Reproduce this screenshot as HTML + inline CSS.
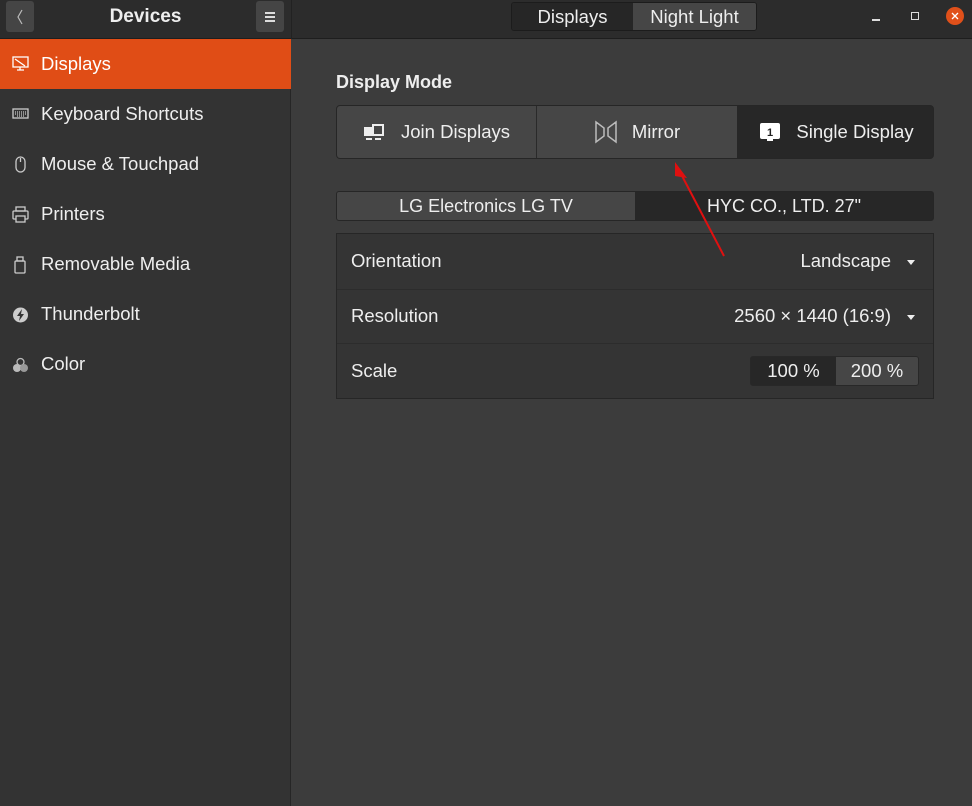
<!DOCTYPE html>
<html><head><style>
*{margin:0;padding:0;box-sizing:border-box}
body{width:972px;height:806px;background:#3c3c3c;font-family:"Liberation Sans",sans-serif;color:#eee;position:relative;overflow:hidden;font-size:18.5px}
.abs{position:absolute}
#hdr{left:0;top:0;width:972px;height:39px;background:#2c2c2c;border-bottom:1px solid #1e1e1e}
#side{left:0;top:39px;width:291px;height:767px;background:#333;border-right:1px solid #262626}
.item{position:absolute;left:0;width:291px;height:50px;line-height:50px;padding-left:41px;font-size:18.5px;color:#eee}
.item svg{position:absolute;left:12px;top:17px}
.btn{position:absolute;display:flex;align-items:center;justify-content:center;font-size:18.5px}
</style></head><body>
<div id="hdr" class="abs"></div>
<div class="abs" style="left:6px;top:1px;width:28px;height:31px;background:#454545;border-radius:3px"><svg width="28" height="31" viewBox="0 0 28 31"><path d="M16 9l-4 7 4 7" fill="none" stroke="#bbb" stroke-width="1.2"/></svg></div>
<div class="abs" style="left:0;width:291px;top:6px;text-align:center;font-weight:bold;font-size:19px">Devices</div>
<div class="abs" style="left:256px;top:1px;width:28px;height:31px;background:#454545;border-radius:3px"><div style="position:absolute;left:9px;top:11px;width:10px;height:1.5px;background:#ddd;box-shadow:0 4px 0 #ddd,0 8px 0 #ddd"></div></div>
<div class="abs" style="left:291px;top:0;width:1px;height:39px;background:#222"></div>
<div class="abs" style="left:511px;top:2px;width:246px;height:29px;border:1px solid #1c1c1c;border-radius:3px;overflow:hidden;display:flex">
<div style="width:121px;background:#262626;text-align:center;line-height:27px;font-size:18.5px">Displays</div>
<div style="flex:1;background:#464646;text-align:center;line-height:27px;font-size:18.5px">Night Light</div></div>
<div class="abs" style="left:872px;top:19px;width:8px;height:1.5px;background:#ddd"></div>
<div class="abs" style="left:911px;top:12px;width:8px;height:8px;border:1.5px solid #ddd"></div>
<div class="abs" style="left:946px;top:7px;width:18px;height:18px;border-radius:50%;background:#e0501a"><svg width="18" height="18"><path d="M6 6l6 6M12 6l-6 6" stroke="#fff" stroke-width="1.3"/></svg></div>

<div id="side" class="abs">
<div class="item" style="top:0;background:#e04d16;color:#fff"><svg width="18" height="16" viewBox="0 0 18 16" fill="none" stroke="#fff" stroke-width="1.3"><rect x="1" y="1" width="15" height="10"/><path d="M3 3l10 7M8 11v3M5 14h7"/></svg>Displays</div>
<div class="item" style="top:50px"><svg width="18" height="16" viewBox="0 0 18 16" fill="none" stroke="#ccc" stroke-width="1.3"><rect x="1" y="3" width="15" height="9"/><path d="M3 6h11M3 8h11M5 10h7" stroke-dasharray="1 1"/></svg>Keyboard Shortcuts</div>
<div class="item" style="top:100px"><svg width="18" height="18" viewBox="0 0 18 18" fill="none" stroke="#ccc" stroke-width="1.3"><rect x="4" y="1" width="9" height="15" rx="4.5"/><path d="M8.5 2v4"/></svg>Mouse &amp; Touchpad</div>
<div class="item" style="top:150px"><svg width="18" height="18" viewBox="0 0 18 18" fill="none" stroke="#ccc" stroke-width="1.3"><rect x="4" y="1" width="9" height="4"/><rect x="1" y="5" width="15" height="8" rx="1"/><rect x="4" y="10" width="9" height="6" fill="#333"/></svg>Printers</div>
<div class="item" style="top:200px"><svg width="18" height="18" viewBox="0 0 18 18" fill="none" stroke="#ccc" stroke-width="1.3"><rect x="5" y="1" width="6" height="4"/><rect x="3" y="5" width="10" height="12" rx="1"/></svg>Removable Media</div>
<div class="item" style="top:250px"><svg width="18" height="18" viewBox="0 0 18 18"><circle cx="8.5" cy="9" r="7.5" fill="#ccc"/><path d="M10 3L5 10h3l-1 5 5-7H9z" fill="#333"/></svg>Thunderbolt</div>
<div class="item" style="top:300px"><svg width="18" height="18" viewBox="0 0 18 18" fill="#bbb"><circle cx="8.5" cy="6" r="3.5" fill="none" stroke="#bbb" stroke-width="1.3"/><circle cx="5" cy="12" r="4"/><circle cx="12" cy="12" r="4" fill="#999"/></svg>Color</div>
</div>

<div class="abs" style="left:336px;top:72px;font-weight:bold;font-size:18px">Display Mode</div>
<div class="abs" style="left:336px;top:105px;width:598px;height:54px;border:1px solid #262626;border-radius:4px;overflow:hidden;background:#272727">
<div class="btn" style="left:0;top:0;width:200px;height:52px;background:#464646;border-right:1px solid #2a2a2a"><svg width="24" height="20" viewBox="0 0 24 20" style="margin-right:14px" fill="none" stroke="#eee" stroke-width="2"><rect x="2" y="6" width="8" height="7" fill="#eee"/><rect x="10" y="3" width="10" height="10"/><path d="M3 17h6M12 17h6"/></svg>Join Displays</div>
<div class="btn" style="left:200px;top:0;width:200px;height:52px;background:#464646"><svg width="24" height="24" viewBox="0 0 24 24" style="margin-right:14px" fill="none" stroke="#bbb" stroke-width="1.5"><path d="M2 2l8 6v8l-8 6zM22 2l-8 6v8l8 6z"/></svg>Mirror</div>
<div class="btn" style="left:400px;top:0;width:198px;height:52px"><svg width="24" height="24" viewBox="0 0 24 24" style="margin-right:14px"><rect x="2" y="3" width="20" height="16" rx="2" fill="#fff"/><rect x="9" y="19" width="6" height="2" fill="#fff"/><text x="12" y="16" text-anchor="middle" font-size="11" font-weight="bold" fill="#222" font-family="Liberation Sans">1</text></svg>Single Display</div>
</div>

<div class="abs" style="left:336px;top:191px;width:598px;height:30px;border:1px solid #262626;border-radius:3px;overflow:hidden;display:flex;background:#272727">
<div style="width:298px;background:#464646;text-align:center;line-height:28px;font-size:18px">LG Electronics LG TV</div>
<div style="flex:1;text-align:center;line-height:28px;font-size:18px">HYC CO., LTD. 27"</div></div>

<div class="abs" style="left:336px;top:233px;width:598px;height:166px;border:1px solid #262626;background:#343434">
<div style="position:absolute;left:14px;top:16px">Orientation</div>
<div style="position:absolute;right:42px;top:16px">Landscape</div>
<div style="position:absolute;right:18px;top:26px;border:4.5px solid transparent;border-top:5px solid #eee"></div>
<div style="position:absolute;left:0;top:55px;width:100%;height:1px;background:#2c2c2c"></div>
<div style="position:absolute;left:14px;top:71px">Resolution</div>
<div style="position:absolute;right:42px;top:71px">2560 × 1440 (16:9)</div>
<div style="position:absolute;right:18px;top:81px;border:4.5px solid transparent;border-top:5px solid #eee"></div>
<div style="position:absolute;left:0;top:109px;width:100%;height:1px;background:#2c2c2c"></div>
<div style="position:absolute;left:14px;top:126px">Scale</div>
<div style="position:absolute;left:413px;top:122px;width:169px;height:30px;border:1px solid #282828;border-radius:3px;overflow:hidden;display:flex;background:#272727">
<div style="width:85px;text-align:center;line-height:28px">100 %</div>
<div style="flex:1;background:#464646;text-align:center;line-height:28px">200 %</div></div>
</div>

<svg class="abs" style="left:0;top:0" width="972" height="806"><path d="M724 256L680 172" stroke="#e01010" stroke-width="2"/><path d="M675 162l12 16-12 -2z" fill="#e01010"/></svg>
</body></html>
